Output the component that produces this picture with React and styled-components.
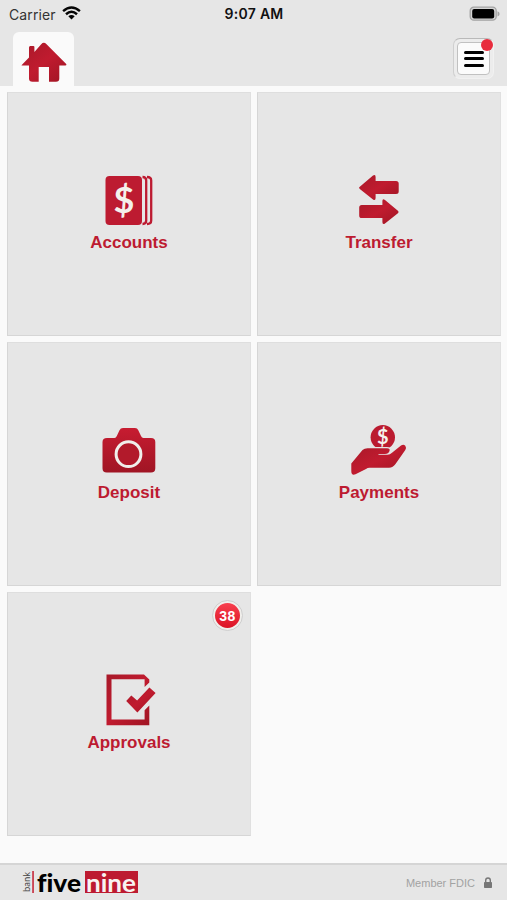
import { createGlobalStyle, styled } from "styled-components";

const items = [
  { label: "Accounts", icon: AccountsIcon },
  { label: "Transfer", icon: TransferIcon },
  { label: "Deposit", icon: DepositIcon },
  { label: "Payments", icon: PaymentsIcon },
  { label: "Approvals", icon: ApprovalsIcon, count: 38 },
];

export default function App() {
  return (
    <Screen>
      <GlobalStyle />
      <RedGradient />
      <Header>
        <StatusBar>
          <Carrier>
            Carrier
            <WifiIcon />
          </Carrier>
          <Time>9:07 AM</Time>
          <BatteryIcon />
        </StatusBar>
        <Nav>
          <HomeTab aria-label="Home">
            <HomeIcon />
          </HomeTab>
          <MenuButton aria-label="Menu">
            <MenuFace>
              <MenuLine />
              <MenuLine />
              <MenuLine />
            </MenuFace>
            <Dot />
          </MenuButton>
        </Nav>
      </Header>
      <Grid>
        {items.map(({ label, icon: Icon, count }) => (
          <Tile key={label}>
            <Icon />
            <Label>{label}</Label>
            {count && <Badge>{count}</Badge>}
          </Tile>
        ))}
      </Grid>
      <Footer>
        <Logo />
        <Member>
          Member FDIC
          <LockIcon />
        </Member>
      </Footer>
    </Screen>
  );
}

function RedGradient() {
  return (
    <HiddenSvg width="0" height="0">
      <defs>
        <linearGradient id="red" x1="0" y1="0" x2="0" y2="1">
          <stop offset="0" stopColor="#c71c31" />
          <stop offset="1" stopColor="#a01524" />
        </linearGradient>
        <linearGradient id="redDiagonal" x1="0" y1="0" x2="1" y2="1">
          <stop offset="0" stopColor="#a81929" />
          <stop offset="0.5" stopColor="#c01b2f" />
          <stop offset="1" stopColor="#a01524" />
        </linearGradient>
      </defs>
    </HiddenSvg>
  );
}

function WifiIcon() {
  return (
    <svg width="19" height="14" viewBox="0 0 19 14" fill="none">
      <g stroke="#050505" strokeWidth="2.5">
        <path d="M1.1 5.1Q9.5 -2 17.9 5.1" />
        <path d="M4 8.2Q9.5 3.4 15 8.2" />
      </g>
      <path d="M6.3 10.2Q9.5 7.7 12.7 10.2L9.5 13.5Z" fill="#050505" />
    </svg>
  );
}

function BatteryIcon() {
  return (
    <svg width="31" height="16" viewBox="0 0 31 16">
      <rect x="1.2" y="1.2" width="26" height="13" rx="3.6" fill="#d5d5d5" stroke="#a3a3a3" strokeWidth="1.3" />
      <rect x="3.2" y="3.1" width="22" height="9.5" rx="2" fill="#000" />
      <path d="M28.5 5.2Q30.6 6 30.6 7.9Q30.6 9.8 28.5 10.5Z" fill="#a3a3a3" />
    </svg>
  );
}

function HomeIcon() {
  return (
    <svg width="46" height="41" viewBox="0 0 46 41">
      <path
        d="M0.5 23.2L8 15.6V5.5Q8 4 9.3 4H12.4Q13.4 4 13.4 5V10L20.2 2.2Q22.7 -0.4 25.3 2L45.2 22Q45.9 23.5 44.3 23.5H38.3V36.5Q38.3 39.8 35 39.8H28V24.9H17.7V39.8H11.5Q8 39.8 8 36.5V23.5H1Q0 23.5 0.5 23.2Z"
        fill="url(#redDiagonal)"
      />
    </svg>
  );
}

function AccountsIcon() {
  return (
    <svg width="60" height="60" viewBox="0 0 60 60">
      <rect x="6.5" y="6" width="36.5" height="49" rx="4" fill="#bd1b31" />
      <g stroke="#bd1b31" strokeWidth="2.3" fill="none">
        <path d="M43.5 7Q47.2 7 47.2 10.5V50.5Q47.2 54 43.5 54" />
        <path d="M48 7Q52.2 7 52.2 10.5V50.5Q52.2 54 48 54" />
      </g>
      <Dollar x="25" y="42.7" fontSize="36">
        $
      </Dollar>
    </svg>
  );
}

function TransferIcon() {
  return (
    <svg width="60" height="60" viewBox="0 0 60 60">
      <g fill="url(#redDiagonal)">
        <path d="M10.8 16.8L24 5.6Q26.6 4 26.6 7V11H47Q49.7 11 49.7 13.5V21.5Q49.7 24 47 24H26.6V28Q26.6 31 24 29.5L10.8 19Q9.2 17.9 10.8 16.8Z" />
        <path d="M48.9 40.8L36 29.9Q33.4 28.2 33.4 31.1V35H12.7Q10.2 35 10.2 37.6V45.4Q10.2 48 12.7 48H33.4V52.1Q33.4 55.1 36 53.6L48.9 43.2Q50.4 42 48.9 40.8Z" />
      </g>
    </svg>
  );
}

function DepositIcon() {
  return (
    <svg width="60" height="60" viewBox="0 0 60 60">
      <path
        d="M8 18H15.5Q17 18 17.8 16L20.5 10.3Q21.5 8 24 8H36Q38.3 8 39.3 10.3L42 16Q42.8 18 44.5 18H52Q56.3 18 56.3 22V48.2Q56.3 52.5 52 52.5H7.8Q3.5 52.5 3.5 48.2V22Q3.5 18 8 18Z"
        fill="url(#red)"
      />
      <circle cx="29.5" cy="34.2" r="12.4" fill="#b21a2b" stroke="#f0efeb" strokeWidth="3" />
    </svg>
  );
}

function PaymentsIcon() {
  return (
    <svg width="60" height="60" viewBox="0 0 60 60">
      <circle cx="33.8" cy="17.3" r="12.2" fill="#bb1b30" />
      <Dollar x="33.8" y="24.2" fontSize="20">
        $
      </Dollar>
      <path
        d="M2.3 43.5L13.5 30.1Q15.5 28.2 18.5 28.2H38Q41.4 28.2 40.5 31Q39.5 34 36 34H29.5V34.8H38.5Q41 34.8 43 32.8L52 25.6Q54.5 24 56.3 25.8Q57.7 27.8 56.3 30L46.5 44Q44 47.7 40 47.7H20.5Q18.5 47.7 17 49L6.5 54.3Q2.3 56 2.3 51Z"
        fill="url(#redDiagonal)"
        stroke="#e6e6e6"
        strokeWidth="2.4"
        paintOrder="stroke"
      />
    </svg>
  );
}

function ApprovalsIcon() {
  return (
    <svg width="60" height="60" viewBox="0 0 60 60">
      <path d="M7.5 4.5H45L50.3 9.5V12.5L45.6 17V9.3H12.5V49.5H45.6V40.2L50.3 35.5V55.2H7.5Z" fill="url(#redDiagonal)" />
      <path d="M27.2 31L32.3 25.5L38.1 30.6L50.4 17.6L56.6 23L38.4 42.4Z" fill="url(#redDiagonal)" />
    </svg>
  );
}

function Logo() {
  return (
    <svg width="116" height="34" viewBox="0 0 116 34">
      <BankText transform="translate(8.2 26) rotate(-90)" textLength="20" lengthAdjust="spacingAndGlyphs">
        bank
      </BankText>
      <rect x="10.2" y="5" width="1.7" height="22" fill="#c83546" />
      <LogoText x="15" y="25.8" textLength="44" lengthAdjust="spacingAndGlyphs" $bold>
        five
      </LogoText>
      <rect x="63" y="5" width="53" height="22" fill="#bd1b31" />
      <LogoText x="64" y="25.5" textLength="50" lengthAdjust="spacingAndGlyphs" fill="#f8f3f1">
        nine
      </LogoText>
    </svg>
  );
}

function LockIcon() {
  return (
    <svg width="8" height="12" viewBox="0 0 8 12">
      <path d="M1.7 5.5V3.3Q1.7 1 4 1T6.3 3.3V5.5" fill="none" stroke="#777" strokeWidth="1.4" />
      <rect x="0" y="5" width="8" height="6" rx="0.7" fill="#777" />
    </svg>
  );
}

const GlobalStyle = createGlobalStyle`
  * {
    box-sizing: border-box;
  }
  body {
    margin: 0;
    font-family: "Liberation Sans", Arial, sans-serif;
    background: #fafafa;
  }
  svg {
    display: block;
    flex-shrink: 0;
  }
`;

const HiddenSvg = styled.svg`
  position: absolute;
`;

const Screen = styled.div`
  display: flex;
  flex-direction: column;
  width: 507px;
  height: 900px;
  overflow: hidden;
  background: #fafafa;
`;

const Header = styled.header`
  height: 86px;
  background: #e6e6e6;
`;

const StatusBar = styled.div`
  display: grid;
  grid-template-columns: 1fr auto 1fr;
  align-items: center;
  height: 28px;
  padding: 0 7px 0 9px;

  > svg {
    justify-self: end;
    margin-top: -1px;
  }
`;

const Carrier = styled.div`
  display: flex;
  align-items: center;
  gap: 6px;
  color: #333;
  font-family: Inter, sans-serif;
  font-size: 14px;
  letter-spacing: 0.1px;

  svg {
    margin-top: -3px;
  }
`;

const Time = styled.div`
  margin-right: 1px;
  color: #111;
  font-family: Inter, sans-serif;
  font-size: 14px;
  font-weight: 600;
  line-height: 17px;
  letter-spacing: 0.3px;
  padding-bottom: 1px;
`;

const Nav = styled.nav`
  display: flex;
  justify-content: space-between;
  padding: 4px 13px 0;
`;

const HomeTab = styled.button`
  width: 61px;
  height: 54px;
  padding: 6px 0 0 8px;
  border: none;
  border-radius: 6px 6px 0 0;
  background: #fafafa;
`;

const MenuButton = styled.button`
  position: relative;
  width: 41px;
  height: 41px;
  margin-top: 6px;
  padding: 3px;
  border: 1px solid #f1f1f1;
  border-top-color: #b9b9b9;
  border-left-color: #cfcfcf;
  border-radius: 7px;
  background: #ececec;
`;

const MenuFace = styled.span`
  display: flex;
  flex-direction: column;
  align-items: center;
  justify-content: center;
  gap: 3.5px;
  width: 33px;
  height: 33px;
  border: 1px solid #c1c1c1;
  border-radius: 4px;
  background: #fbfbfb;
`;

const MenuLine = styled.span`
  width: 20px;
  height: 3px;
  border-radius: 1.5px;
  background: #000;
`;

const Dot = styled.span`
  position: absolute;
  top: 0;
  right: 0;
  width: 12px;
  height: 12px;
  border-radius: 50%;
  background: #e82c3d;
`;

const Grid = styled.main`
  flex: 1;
  display: grid;
  grid-template-columns: 244px 244px;
  grid-auto-rows: 244px;
  gap: 6px;
  padding: 6px 6px 0 7px;
`;

const Tile = styled.section`
  position: relative;
  display: flex;
  flex-direction: column;
  align-items: center;
  padding-top: 77px;
  border: 1px solid #d6d6d6;
  border-top-color: #dedede;
  border-right-color: #e0e0e0;
  background: #e6e6e6;
`;

const Label = styled.div`
  margin-top: 3px;
  color: #bd1b31;
  font-size: 17px;
  font-weight: 700;
  line-height: 20px;
`;

const Badge = styled.span`
  position: absolute;
  top: 8px;
  right: 8px;
  display: flex;
  align-items: center;
  justify-content: center;
  width: 29px;
  height: 29px;
  border: 2px solid #f0eeeb;
  border-radius: 50%;
  outline: 1px solid #cfcfcf;
  background: linear-gradient(#fa4351, #d90f22);
  background-origin: border-box;
  color: #fff;
  font-size: 14px;
  font-weight: 700;
  letter-spacing: 0.5px;
`;

const Footer = styled.footer`
  display: flex;
  align-items: center;
  justify-content: space-between;
  height: 37px;
  padding: 0 15px 0 22px;
  border-top: 2px solid #d5d5d5;
  background: #e6e6e6;
`;

const Member = styled.div`
  display: flex;
  align-items: center;
  gap: 9px;
  color: #a2a2a2;
  font-size: 11px;
`;

const Dollar = styled.text`
  fill: #f4f0ec;
  font-family: Lato, sans-serif;
  font-weight: 700;
  text-anchor: middle;
`;

const BankText = styled.text`
  fill: #444;
  font-family: Lato, sans-serif;
  font-size: 9px;
`;

const LogoText = styled.text`
  font-family: Lato, sans-serif;
  font-size: 25px;
  font-weight: ${(props) => (props.$bold ? 900 : 700)};
  font-variant-ligatures: none;
`;
